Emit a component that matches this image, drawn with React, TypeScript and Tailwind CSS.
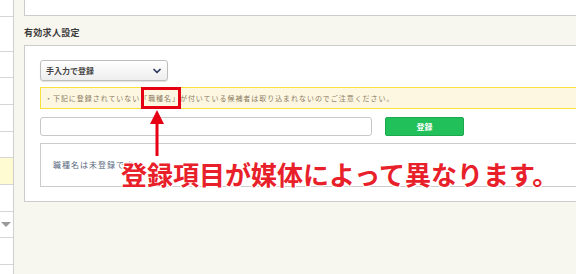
import { ChevronDown } from "lucide-react";

const jp = "[font-family:'Noto_Sans_CJK_JP','Noto_Sans',sans-serif]";

function Sidebar() {
  const rows = ["h-[17px]", "h-[35px]", "h-[26px]", "h-[27px]", "h-[27px]", "h-[26px]"];
  return (
    <div className="w-[14px] shrink-0 bg-white border-r border-[#cfcfcf] flex flex-col">
      {rows.map((h, i) => (
        <div key={i} className={`${h} border-b border-[#d6d6d6]`} />
      ))}
      <div className="h-[27px] bg-[#fefbd2] border-b border-[#d6d6d6]" />
      <div className="h-[27px] border-b border-[#d6d6d6]" />
      <div className="h-[26px] flex items-center pl-[1px] border-b border-[#d6d6d6]">
        <span className="w-0 h-0 border-l-[5px] border-r-[5px] border-t-[5px] border-l-transparent border-r-transparent border-t-[#9a9a9a]" />
      </div>
      <div className="h-[27px] border-b border-[#d6d6d6]" />
      <div className="flex-1" />
    </div>
  );
}

export default function App() {
  return (
    <div className={`relative w-[576px] h-[274px] overflow-hidden bg-[#f7f6ef] flex ${jp}`}>
      <Sidebar />

      <div className="w-[620px] shrink-0 ml-[10px] flex flex-col">
        <div className="h-[16px] bg-white border-l border-b border-[#cccccc]" />

        <div className="h-[29px] flex items-center pt-[4px]">
          <h3 className="text-[9px] font-bold text-[#3a3a3a] tracking-[0.3px]">有効求人設定</h3>
        </div>

        <div className="bg-white border border-[#cccccc] pl-[15px] pt-[14px] pb-[14px]">
          <div className="w-[128px] h-[21px] rounded-[3px] border border-[#bdbdbd] bg-gradient-to-b from-white to-[#eeeeee] shadow-[0_1px_1px_rgba(0,0,0,0.12)] flex items-center justify-between pl-[5px] pr-[4px]">
            <span className="text-[8px] font-bold text-[#444444]">手入力で登録</span>
            <ChevronDown className="w-[12px] h-[12px] text-[#2e3a5e]" strokeWidth={3.5} />
          </div>

          <div className="mt-[6px] h-[22px] bg-[#fdf7e2] border border-[#f6e23a] flex items-center pl-[4px]">
            <p className="text-[7px] tracking-[0.95px] text-[#8c7c62] whitespace-nowrap">
              ・下記に登録されていない「職種名」が付いている候補者は取り込まれないのでご注意ください。
            </p>
          </div>

          <div className="mt-[8px] flex items-center gap-[13px]">
            <div className="w-[332px] h-[19px] rounded-[3px] border border-[#c8c8c8] bg-white" />
            <button className="w-[79px] h-[19px] rounded-[2px] bg-[#22c05a] border border-[#1ca84e] text-white text-[8px] font-bold flex items-center justify-center">
              登録
            </button>
          </div>

          <div className="mt-[7px] h-[44px] border border-[#cccccc] flex items-center pl-[12px]">
            <span className="text-[8px] tracking-[1px] text-[#5b6a82]">職種名は未登録です。</span>
          </div>
        </div>
      </div>

      {/* annotation overlay */}
      <div className="absolute left-[141px] top-[87px] w-[40px] h-[22px] border-[3px] border-[#e60014]" />
      <svg className="absolute left-[149px] top-[109px]" width="16" height="48" viewBox="0 0 16 48">
        <polygon points="8,1 15,15 1,15" fill="#e60014" />
        <rect x="6.5" y="14" width="3" height="33" fill="#e60014" />
      </svg>
      <p className="absolute left-[121px] top-[161px] text-[26px] leading-[26px] font-bold text-[#e8202a] whitespace-nowrap [text-shadow:0_0_2px_#fff,1px_1px_0_#fff,-1px_-1px_0_#fff,1px_-1px_0_#fff,-1px_1px_0_#fff]">
        登録項目が媒体によって異なります。
      </p>
    </div>
  );
}
